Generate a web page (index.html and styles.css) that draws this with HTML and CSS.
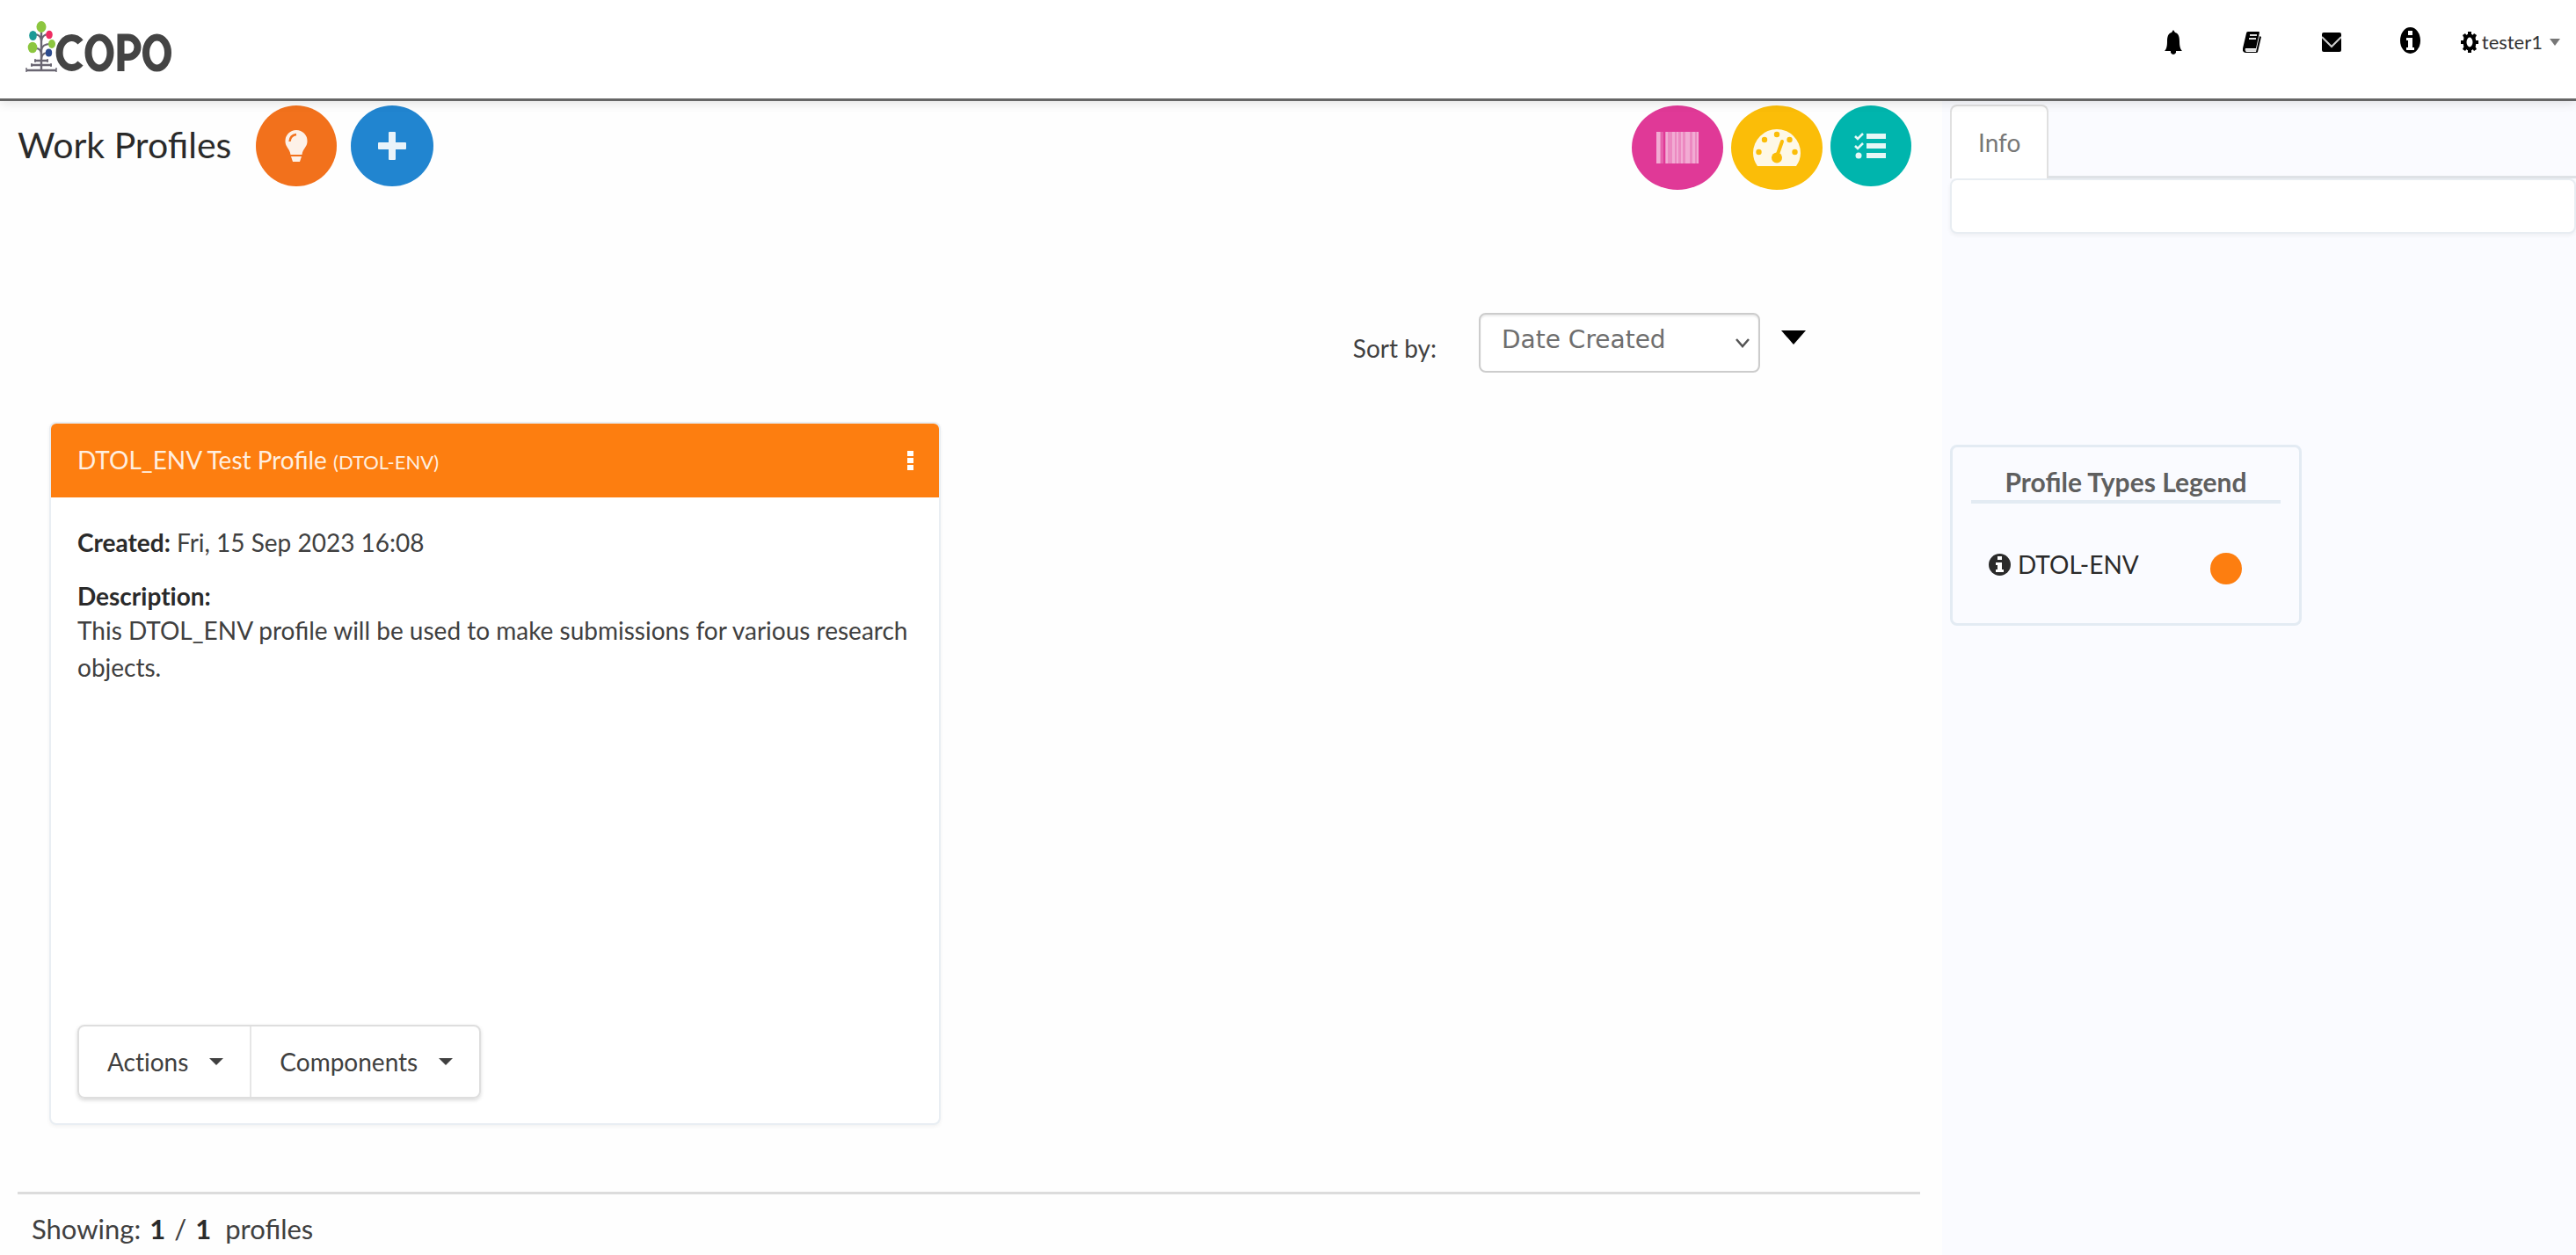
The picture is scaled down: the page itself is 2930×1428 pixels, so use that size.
FILE: index.html
```html
<!DOCTYPE html>
<html lang="en">
<head>
<meta charset="utf-8">
<meta name="viewport" content="width=device-width, initial-scale=1">
<title>COPO - Work Profiles</title>
<link rel="stylesheet" href="styles.css">
</head>
<body>
<header class="topbar">
  <a class="brand" href="#" aria-label="COPO home">
    <svg class="brand-logo" viewBox="0 0 168 60" role="img" aria-label="COPO">
      <g fill="none" stroke="#6a6672" stroke-width="2">
        <path d="M18 14v42" stroke-width="2.4"/>
        <path d="M10 16q7 0 8 7M26 16q-7 0-8 8M12 32q6 0 6 8M28 27q-9 0-10 7M24 37q-6 1-6 8"/>
        <path d="M10 46h16M6 51h24M1 57h34" stroke-width="2.4"/>
        <path d="M11 44v4M25 44v4M7 49v4M29 49v4M1 54v5M35 54v5" stroke-width="1.4"/>
      </g>
      <ellipse cx="18" cy="7.500" rx="5.500" ry="6.500" fill="#8cc63f"/>
      <ellipse cx="8.500" cy="17.500" rx="4.300" ry="5.500" fill="#1b9a96"/>
      <ellipse cx="27" cy="16.500" rx="3.800" ry="4.800" fill="#ee2d62"/>
      <ellipse cx="30" cy="27" rx="4" ry="5" fill="#8cc63f"/>
      <ellipse cx="8" cy="31" rx="5.300" ry="6.300" fill="#8cc63f"/>
      <ellipse cx="26.500" cy="37" rx="3.700" ry="4.500" fill="#2c4b8e"/>
      <g fill="none" stroke="#444" stroke-width="8">
        <path d="M62.500 25a14 17 0 1 0 0 24"/>
        <ellipse cx="84" cy="37" rx="12.500" ry="17.500"/>
        <path d="M108.500 58V19.500h8a8.500 8.700 0 0 1 0 22.500h-8"/>
        <ellipse cx="149.500" cy="37" rx="12.500" ry="17.500"/>
      </g>
    </svg>
  </a>
  <nav class="topnav">
    <a class="nav-icon" href="#" aria-label="Notifications"><svg width="20" height="28" viewBox="0 0 20 28"><path d="M10 0l2 3c4 1 5 5 5 10 0 6 1 9 3 11H0c2-2 3-5 3-11C3 8 4 4 8 3zM7 24h6v2q-3 4-6 0z"/></svg></a>
    <a class="nav-icon" href="#" aria-label="Documentation"><svg width="22" height="26" viewBox="0 0 22 26"><path d="M6 1h12q1 0 1 1l-4 18H3q-1 3 1 4h11l4-18 2 1-4 17q0 1-2 1H3q-4-1-3-5L4 3q0-2 2-2z"/><path d="M8 5h8M7 9h8M3 22h12" stroke="#ddd" stroke-width="2"/></svg></a>
    <a class="nav-icon" href="#" aria-label="Messages"><svg width="22" height="22" viewBox="0 0 22 22"><rect width="22" height="22" rx="2"/><path d="M0 5l11 11L22 5" fill="none" stroke="#ccc" stroke-width="2"/></svg></a>
    <a class="nav-icon nav-info" href="#" aria-label="About"><svg width="23" height="30" viewBox="0 0 23 30"><ellipse cx="11.500" cy="15" rx="11.500" ry="15"/><path d="M9 4h5v5H9zM7 12h7v11h2v3H7v-3h2v-8H7z" fill="#fff"/></svg></a>
    <button class="user-menu" type="button">
      <svg width="20" height="26" viewBox="0 0 20 26"><ellipse cx="10" cy="13" rx="5.500" ry="7.500" fill="none" stroke="#000" stroke-width="4"/><path d="M8 1h4v4H8zM8 21h4v4H8zM0 11h3v4H0zM17 11h3v4h-3zM2 5l3-2 2 3-3 3zM18 5l-3-2-2 3 3 3zM2 21l3 2 2-3-3-3zM18 21l-3 2-2-3 3-3z"/></svg>
      <span>tester1</span>
      <svg class="user-caret" width="12" height="8" viewBox="0 0 12 8"><path d="M0 0h12L6 8z"/></svg>
    </button>
  </nav>
</header>

<div class="layout">
  <main class="content">
    <div class="toolbar">
      <h1 class="page-title">Work Profiles</h1>
      <div class="toolbar-group">
        <button class="round orange" type="button" aria-label="Quick tour"><svg width="26" height="36" viewBox="0 0 26 36"><path d="M13 0a12.500 12.500 0 0 1 12.500 13c0 6-5 8-6 15h-13c-1-7-6-9-6-15A12.500 12.500 0 0 1 13 0z"/><path d="M5.500 13q.5-7 7.500-8" fill="none" stroke="#f2711c" stroke-width="2.400"/><path d="M7 30h12l-2 6H9z"/></svg></button>
        <button class="round blue" type="button" aria-label="Add profile"><svg width="32" height="32" viewBox="0 0 32 32"><path d="M12 1q0-1 1-1h6q1 0 1 1v11h11q1 0 1 1v6q0 1-1 1H20v11q0 1-1 1h-6q-1 0-1-1V20H1q-1 0-1-1v-6q0-1 1-1h11z"/></svg></button>
      </div>
      <div class="toolbar-group toolbar-end">
        <button class="round wide pink" type="button" aria-label="Accessions"><svg width="48" height="36" viewBox="0 0 48 36"><path d="M0 0h48v36H0z" opacity=".45"/><path d="M0 0h4v36H0zM11 0h2v36h-2zM18 0h3v36h-3zM23 0h2v36h-2zM28 0h2v36h-2zM33 0h5v36h-5zM41 0h3v36h-3zM46 0h2v36h-2z" opacity=".35"/><path d="M5 0h3v36H5z" fill="#e03997" opacity=".5"/><path d="M8 0h2v36H8z" fill="#e03997"/></svg></button>
        <button class="round wide yellow" type="button" aria-label="Dashboard"><svg width="54" height="42" viewBox="0 0 54 42"><path d="M5 42Q0 35 0 27a27 27 0 0 1 54 0q0 8-5 15z"/><g fill="#fbbd08"><circle cx="27" cy="6" r="3.200"/><circle cx="13" cy="12" r="3.200"/><circle cx="41.500" cy="12" r="3.200"/><circle cx="6.500" cy="26" r="3.200"/><circle cx="47.500" cy="26" r="3.200"/><circle cx="27" cy="32.500" r="6"/></g><path d="M27 31l6-17" stroke="#fbbd08" stroke-width="4" stroke-linecap="round"/></svg></button>
        <button class="round teal" type="button" aria-label="Tasks"><svg width="38" height="32" viewBox="0 0 38 32"><path d="M14 2h22v6H14zM14 13h22v6H14zM14 24h22v6H14z"/><circle cx="5" cy="27" r="3.500"/><path d="M1 5l3 3 6-6M1 16l3 3 6-6" fill="none" stroke="#fff" stroke-width="2.600"/></svg></button>
      </div>
    </div>

    <div class="sortbar">
      <label for="sort">Sort by:</label>
      <div class="select-wrap">
        <select id="sort"><option>Date Created</option><option>Title</option><option>Type</option></select>
        <svg class="select-chevron" width="18" height="12" viewBox="0 0 18 12"><path d="M2 2l7 8 7-8" fill="none" stroke="#555" stroke-width="2.500"/></svg>
      </div>
      <button class="sort-dir" type="button" aria-label="Sort direction"><svg width="28" height="16" viewBox="0 0 28 16"><path d="M0 0h28L14 16z"/></svg></button>
    </div>

    <article class="card">
      <div class="card-head">
        <h2>DTOL_ENV Test Profile <small>(DTOL-ENV)</small></h2>
        <button class="card-more" type="button" aria-label="More"><svg width="8" height="24" viewBox="0 0 8 24"><path d="M0 1h7v6H0zM0 9h7v6H0zM0 17h7v6H0z"/></svg></button>
      </div>
      <div class="card-body">
        <p class="created"><strong>Created:</strong> Fri, 15 Sep 2023 16:08</p>
        <p class="label"><strong>Description:</strong></p>
        <p class="description">This DTOL_ENV profile will be used to make submissions for various research objects.</p>
        <div class="button-group">
          <button type="button">Actions <svg width="16" height="8" viewBox="0 0 16 8"><path d="M0 0h16L8 8z"/></svg></button>
          <button type="button">Components <svg width="16" height="8" viewBox="0 0 16 8"><path d="M0 0h16L8 8z"/></svg></button>
        </div>
      </div>
    </article>

    <footer class="count">Showing: <strong>1</strong> <span>/</span> <strong>1</strong> <span class="count-unit">profiles</span></footer>
  </main>

  <aside class="sidebar">
    <div class="tabs"><a class="tab" href="#info">Info</a></div>
    <div class="tab-panel" id="info"></div>
    <section class="legend">
      <h2>Profile Types Legend</h2>
      <div class="legend-row">
        <svg width="25" height="25" viewBox="0 0 25 25"><circle cx="12.500" cy="12.500" r="12.500"/><path d="M10 3h5v4h-5zM8 10h7v8h2v3H8v-3h2v-5H8z" fill="#fff"/></svg>
        <span>DTOL-ENV</span>
        <i class="dot"></i>
      </div>
    </section>
  </aside>
</div>
</body>
</html>
```
FILE: styles.css
```css
* { box-sizing: border-box; }

body {
  margin: 0;
  min-height: 100vh;
  display: flex;
  flex-direction: column;
  background: #fefefe;
  color: #404040;
  font: 28px/42px Lato, "Liberation Sans", sans-serif;
}

h1, h2, p { margin: 0; font-weight: 400; }
svg { display: block; fill: currentColor; flex: none; }
a { color: inherit; text-decoration: none; }
button { font: inherit; color: inherit; border: 0; padding: 0; background: none; cursor: pointer; }

.topbar {
  position: relative;
  height: 115px;
  display: flex;
  justify-content: space-between;
  align-items: flex-start;
  padding: 23px 18px 0 29px;
  background: #fff;
  border-bottom: 3px solid #666;
  box-shadow: 0 2px 12px rgba(0, 0, 0, .12);
}
.brand-logo { width: 168px; height: 60px; }
.topnav { display: flex; align-items: center; height: 50px; color: #000; }
.nav-icon { width: 90px; display: flex; justify-content: center; }
.nav-info { padding-bottom: 4px; }
.user-menu { display: flex; align-items: center; gap: 4px; margin-left: 12px; font-size: 22px; }
.user-menu span { color: #333; }
.user-caret { margin-left: 4px; color: #777; }

.layout { flex: 1; display: grid; grid-template-columns: minmax(0, 1fr) 721px; }
.content { padding: 5px 25px 0 20px; }

.toolbar { display: flex; align-items: flex-start; gap: 28px; height: 100px; }
.page-title { font-size: 41px; line-height: 90px; color: #2a2a2a; }
.toolbar-group { display: flex; gap: 16px; }
.toolbar-end { margin-left: auto; gap: 9px; padding-right: 10px; }
.round {
  width: 92px;
  height: 92px;
  border-radius: 50%;
  display: flex;
  align-items: center;
  justify-content: center;
  color: #fff;
}
.round svg { opacity: .9; }
.wide { width: 104px; height: 96px; }
.orange { background: #f2711c; }
.blue { background: #2185d0; width: 94px; }
.pink { background: #e03997; }
.yellow { background: #fbbd08; }
.teal { background: #00b5ad; }

.sortbar {
  display: flex;
  justify-content: flex-end;
  align-items: flex-start;
  margin-top: 136px;
  padding-right: 130px;
}
.sortbar label { line-height: 80px; margin-right: 48px; }
.select-wrap { display: grid; width: 320px; }
.select-wrap > * { grid-area: 1 / 1; }
.select-wrap select {
  height: 68px;
  appearance: none;
  padding: 0 48px 8px 24px;
  border: 2px solid #ccc;
  border-radius: 8px;
  background: #fff;
  box-shadow: inset 0 2px 2px rgba(0, 0, 0, .08);
  color: #6e6e6e;
  font: 28px "DejaVu Sans", sans-serif;
}
.select-chevron { place-self: center end; margin-right: 11px; pointer-events: none; }
.sort-dir { margin: 20px 0 0 24px; color: #000; }

.card {
  width: 1014px;
  max-width: 100%;
  margin: 44px 0 0 36px;
  border: 2px solid #e9eef3;
  border-radius: 8px;
  background: #fff;
  box-shadow: 0 2px 4px rgba(0, 0, 0, .05);
  overflow: hidden;
}
.card-head {
  display: flex;
  justify-content: space-between;
  align-items: center;
  height: 84px;
  padding: 0 28px 0 30px;
  background: #fd7e10;
  color: #fff;
}
.card-head h2 { font-size: 28px; color: #ffefe0; }
.card-head small { font-size: 22px; }
.card-body {
  display: flex;
  flex-direction: column;
  min-height: 712px;
  padding: 30px 30px 28px;
}
.card-body strong, .count strong { color: #2a2a2a; }
.created { margin-bottom: 22px; }
.label { line-height: 36px; }
.label, .button-group { font-variant-ligatures: none; }
.button-group {
  display: flex;
  align-self: flex-start;
  margin-top: auto;
  border: 2px solid #dedede;
  border-radius: 8px;
  box-shadow: 0 2px 4px rgba(0, 0, 0, .15);
}
.button-group button { display: flex; align-items: center; gap: 24px; height: 80px; padding: 0 30px 0 32px; }
.button-group button + button { border-left: 2px solid #e6e6e6; }

.count {
  margin-top: 76px;
  padding: 18px 16px;
  border-top: 3px solid #dcdcdc;
  font-size: 31px;
  display: flex;
  gap: 10px;
}
.count-unit { margin-left: 6px; }

.sidebar { padding: 4px 0 0 9px; background: #fafbff; }
.tabs { display: flex; border-bottom: 3px solid #dee2e6; }
.tab {
  height: 84px;
  margin-bottom: -3px;
  padding: 20px 30px 0;
  border: 2px solid #e0e0e0;
  border-bottom: 0;
  border-radius: 8px 8px 0 0;
  background: #fff;
  color: #777;
}
.tab-panel {
  height: 63px;
  border: 2px solid #e8edf2;
  border-radius: 8px;
  background: #fff;
  box-shadow: 0 2px 4px rgba(0, 0, 0, .05);
}
.legend {
  width: 400px;
  margin-top: 240px;
  padding: 18px 21px 44px;
  border: 3px solid #e3ebf3;
  border-radius: 8px;
}
.legend h2 {
  border-bottom: 4px solid #e3ebf3;
  color: #5f5f5f;
  font-size: 30px;
  font-weight: 700;
  text-align: center;
}
.legend-row { display: flex; align-items: center; gap: 8px; padding: 46px 44px 0 20px; color: #2a2a2a; }
.dot { width: 36px; height: 36px; margin: 10px 0 0 auto; border-radius: 50%; background: #fd7e10; }
```
